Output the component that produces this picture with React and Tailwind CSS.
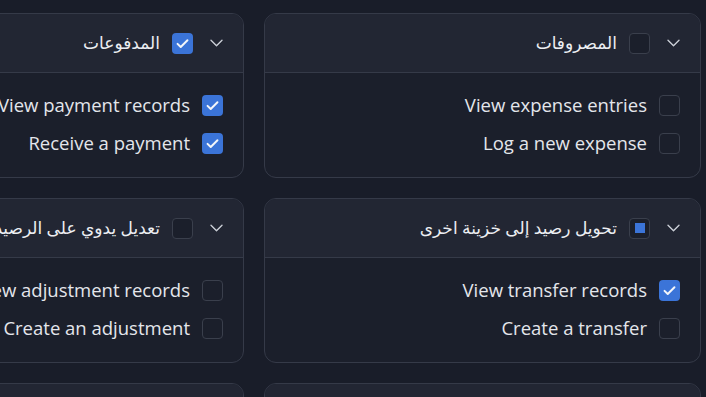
import React from 'react';

const groups = [
  {
    title: 'المصروفات',
    state: 'none',
    items: [
      { label: 'View expense entries', checked: false },
      { label: 'Log a new expense', checked: false },
    ],
  },
  {
    title: 'المدفوعات',
    state: 'all',
    items: [
      { label: 'View payment records', checked: true },
      { label: 'Receive a payment', checked: true },
    ],
  },
  {
    title: 'تحويل رصيد إلى خزينة اخرى',
    state: 'some',
    items: [
      { label: 'View transfer records', checked: true },
      { label: 'Create a transfer', checked: false },
    ],
  },
  {
    title: 'تعديل يدوي على الرصيد',
    state: 'none',
    items: [
      { label: 'View adjustment records', checked: false },
      { label: 'Create an adjustment', checked: false },
    ],
  },
  {
    title: 'الموردين',
    state: 'none',
    items: [
      { label: 'View suppliers', checked: false },
      { label: 'Add a supplier', checked: false },
    ],
  },
  {
    title: 'العملاء',
    state: 'none',
    items: [
      { label: 'View customers', checked: false },
      { label: 'Add a customer', checked: false },
    ],
  },
];

function Box({ state }) {
  if (state === 'all') {
    return (
      <span className="flex h-[21px] w-[21px] shrink-0 items-center justify-center rounded-[4px] bg-[#3b74d8]">
        <svg width="17" height="17" viewBox="0 0 24 24" fill="none" stroke="#f4f6fa" strokeWidth="2.8" strokeLinecap="round" strokeLinejoin="round">
          <path d="M5 12.5l4.5 4.5L19 7.5" />
        </svg>
      </span>
    );
  }
  if (state === 'some') {
    return (
      <span className="flex h-[21px] w-[21px] shrink-0 items-center justify-center rounded-[4px] border border-[#3a3f4c] bg-[#1b1f2b]">
        <span className="h-[10px] w-[10px] bg-[#3b74d8]" />
      </span>
    );
  }
  return <span className="block h-[21px] w-[21px] shrink-0 rounded-[4px] border border-[#3a3f4c] bg-[#1b1f2b]" />;
}

function Chevron() {
  return (
    <svg width="13" height="8" viewBox="0 0 13 8" fill="none" stroke="#c9cdd5" strokeWidth="1.4" strokeLinecap="round" strokeLinejoin="round" className="shrink-0">
      <path d="M1 1.2l5.5 5.5L12 1.2" />
    </svg>
  );
}

function GroupCard({ group }) {
  return (
    <div className="overflow-hidden rounded-xl border border-[#353a48] bg-[#1b1f2b]">
      <div className="flex h-[59px] items-center border-b border-[#353a48] bg-[#222633] px-5">
        <Chevron />
        <span className="mr-[17px] flex">
          <Box state={group.state} />
        </span>
        <span className="mr-3 whitespace-nowrap text-[17px] font-normal text-[#eceef2]">{group.title}</span>
      </div>
      <div className="flex flex-col gap-[17px] px-5 pt-[22px] pb-[23px]">
        {group.items.map((item) => (
          <div key={item.label} className="flex h-[21px] items-center gap-3">
            <Box state={item.checked ? 'all' : 'none'} />
            <span className="-mt-[2px] whitespace-nowrap text-[18.5px] leading-[21px] text-[#e4e6eb]">{item.label}</span>
          </div>
        ))}
      </div>
    </div>
  );
}

export default function App() {
  return (
    <div
      dir="rtl"
      className="h-[397px] overflow-hidden bg-[#191d29] pt-[13px] pr-[5px]"
      style={{ fontFamily: '"Open Sans", "DejaVu Sans", sans-serif' }}
    >
      <div className="grid w-max grid-cols-[437px_437px] gap-5">
        {groups.map((g) => (
          <GroupCard key={g.title} group={g} />
        ))}
      </div>
    </div>
  );
}
